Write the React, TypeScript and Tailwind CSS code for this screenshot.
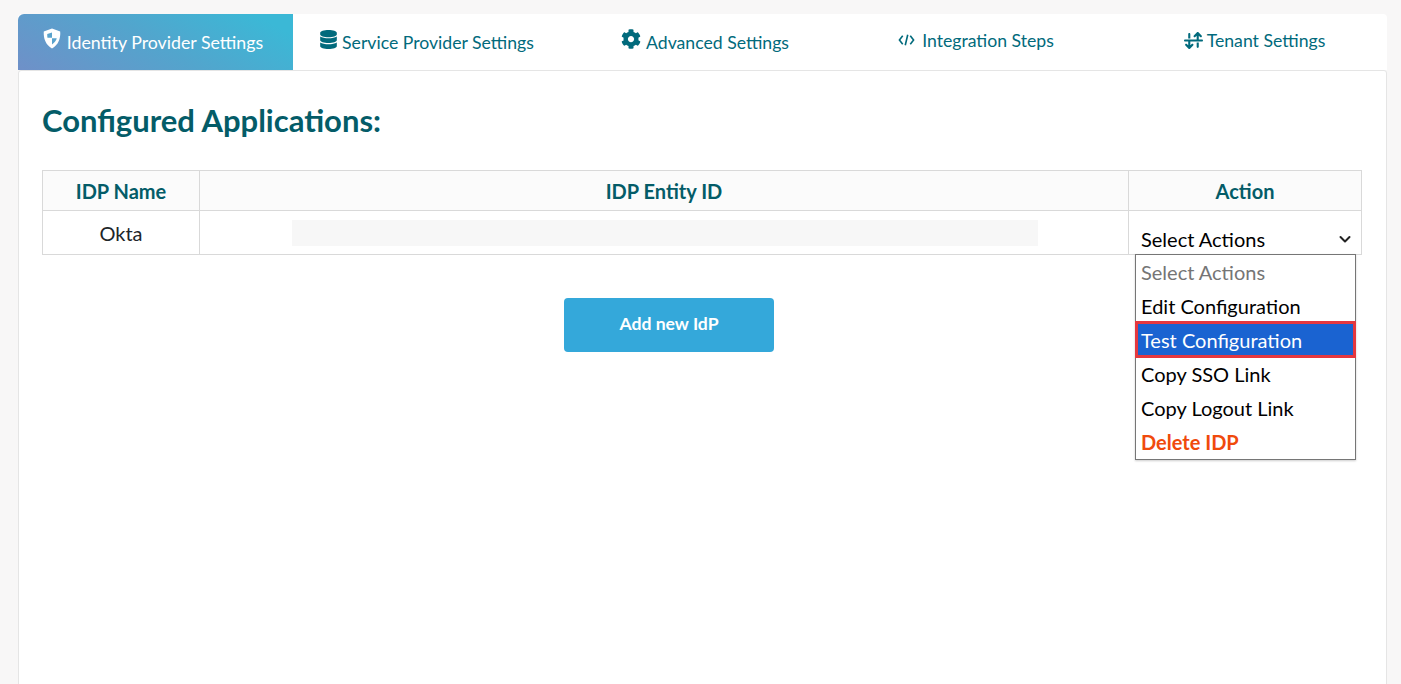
import { FaDatabase, FaCog } from "react-icons/fa";
import { FaArrowDownUpAcrossLine } from "react-icons/fa6";

const tabText = "text-[#016a7c] text-[17.65px] leading-none";

function Tab({ icon, label, cls, textCls }: { icon: React.ReactNode; label: string; cls: string; textCls: string }) {
  return (
    <div className={`flex justify-center ${cls}`}>
      <span className="mr-[6px] text-[#016a7c]">{icon}</span>
      <span className={`${tabText} ${textCls}`}>{label}</span>
    </div>
  );
}

export default function App() {
  return (
    <div className="h-[684px] overflow-hidden bg-[#f8f7f7] pt-[14px] pl-[18px] pr-[14px] font-['Lato',sans-serif]">
      <div className="flex h-[56px] rounded-t-[4px] bg-white">
        <div className="flex w-[275px] justify-center rounded-tl-[6px] bg-[linear-gradient(30deg,#6f90c8_0%,#52a5cd_50%,#3bb8d6_90%)] pt-[15px] pr-[6px]">
          <svg viewBox="0 0 20 22" className="mr-[5px] mt-[-1px] h-[21px] w-[20px]">
            <path fill="#fff" d="M10 .5 18.6 3.6c.5 7.6-2 14-8.6 17.9C3.4 17.6.9 11.2 1.4 3.6Z" />
            <path fill="#5aa3cd" d="M5 6.4 10 4.6v5.6H5.2C5 9 5 7.700 5 6.400Z" />
            <path fill="#5aa3cd" d="M10 10.800h5c-.6 2.500-2.300 4.600-5 6.400Z" />
          </svg>
          <span className="mt-[5px] text-[17.75px] leading-none text-white">Identity Provider Settings</span>
        </div>
        <Tab cls="w-[275px] pt-[15px] pr-[8px]" textCls="mt-[5px] -ml-[2px]" label="Service Provider Settings" icon={<FaDatabase className="text-[19px] mt-[1px]" />} />
        <Tab cls="w-[275px] pt-[15px] pr-[1px]" textCls="mt-[5px] -ml-[1px]" label="Advanced Settings" icon={<FaCog className="text-[20px]" />} />
        <Tab
          cls="w-[272px] pt-[18px] pr-[6px]"
          textCls="mt-[0px]"
          label="Integration Steps"
          icon={
            <svg viewBox="0 0 18 16" className="mr-[1px] h-[16px] w-[17px]" fill="none" stroke="currentColor" strokeWidth="1.7">
              <path d="M5 3.500 1.500 8 5 12.500M13 3.500 16.500 8 13 12.500M10.300 2.500 7.700 13.500" />
            </svg>
          }
        />
        <Tab
          cls="w-[272px] pt-[17px] pl-[7px]"
          textCls="-ml-[2px] mt-[1px]"
          label="Tenant Settings"
          icon={<FaArrowDownUpAcrossLine className="text-[19px]" />}
        />
      </div>
      <div className="h-[640px] rounded-t-[3px] border border-[#e5e5e5] bg-white px-[23px] pt-[30px]">
        <h1 className="text-[31px] font-bold leading-[38px] text-[#045c68]">Configured Applications:</h1>
        <div className="relative mt-[31px] w-[1320px]">
          <table className="w-full table-fixed border-collapse border border-[#d9d9d9] text-[20px]">
            <thead>
              <tr className="h-[40px] bg-[#fbfbfb] text-[20px] font-bold text-[#045c68]">
                <th className="w-[157px] border border-[#d9d9d9] font-bold">IDP Name</th>
                <th className="w-[929px] border border-[#d9d9d9] font-bold">IDP Entity ID</th>
                <th className="border border-[#d9d9d9] font-bold">Action</th>
              </tr>
            </thead>
            <tbody>
              <tr className="h-[44px]">
                <td className="border border-[#d9d9d9] text-center text-[#212529]">Okta</td>
                <td className="border border-[#d9d9d9]">
                  <div className="ml-[92px] h-[26px] w-[746px] bg-[#f7f7f7]" />
                </td>
                <td className="border border-[#d9d9d9]">
                  <div className="flex h-[42px] items-center justify-between pl-[12px] pr-[8px] pt-[12px] leading-[26px] text-black">
                    <span>Select Actions</span>
                    <svg viewBox="0 0 16 16" className="h-[16px] w-[16px]" fill="none" stroke="#222" strokeWidth="2" strokeLinecap="round" strokeLinejoin="round">
                      <path d="M3.500 6l4.500 4.500L12.500 6" />
                    </svg>
                  </div>
                </td>
              </tr>
            </tbody>
          </table>
          <div className="absolute left-[1093px] top-[84px] w-[221px] border border-[#767676] bg-white text-[20px] leading-[34px] text-black shadow-[0_1px_2px_rgba(0,0,0,0.2)]">
            <div className="pl-[5px] text-[#757575]">Select Actions</div>
            <div className="pl-[5px]">Edit Configuration</div>
            <div className="relative -mx-[1px] -mt-[2px] -mb-[1px] border-[3px] border-[#e5383f] bg-[#1a63d1] pl-[3px] pt-[1px] leading-[30px] text-white">Test Configuration</div>
            <div className="pl-[5px]">Copy SSO Link</div>
            <div className="pl-[5px]">Copy Logout Link</div>
            <div className="pl-[5px] font-bold text-[#f04a0c]">Delete IDP</div>
          </div>
        </div>
        <div className="mt-[43px] flex w-[1254px] justify-center">
          <button className="h-[54px] w-[210px] rounded-[4px] bg-[#34a8da] pb-[1px] text-[17.6px] font-bold text-white">Add new IdP</button>
        </div>
      </div>
    </div>
  );
}
